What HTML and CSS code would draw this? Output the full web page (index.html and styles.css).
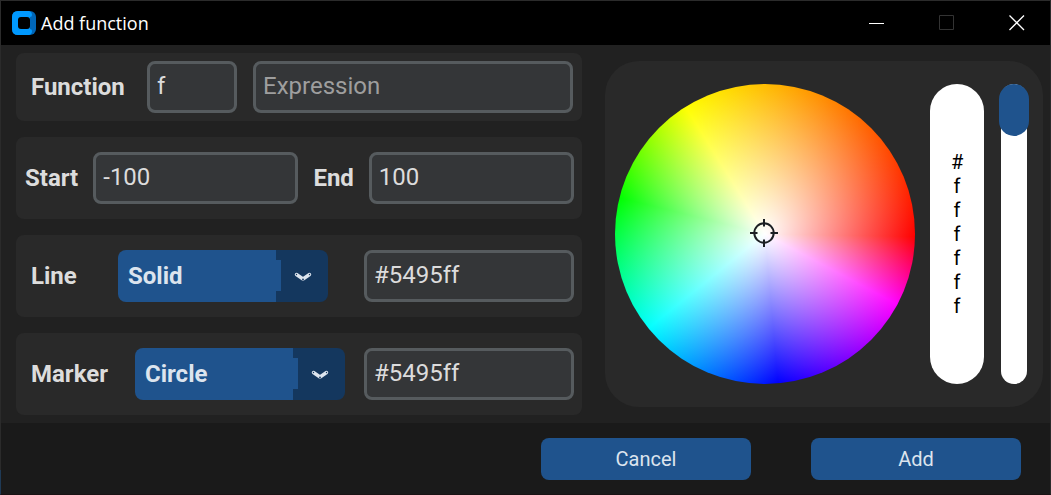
FILE: index.html
```html
<!DOCTYPE html>
<html lang="en">
<head>
<meta charset="utf-8">
<title>Add function</title>
<link rel="stylesheet" href="styles.css">
</head>
<body>
<form class="window">
  <header class="titlebar">
    <svg class="logo" viewBox="0 0 24 24" aria-hidden="true">
      <rect width="24" height="24" rx="6" fill="#0066b8"/>
      <path d="M6 0H17Q20 1 20 4Q20 6 18 6V18Q20 18 20 20Q20 23 17 24H6Q0 24 0 18V6Q0 0 6 0Z" fill="#0099ff"/>
      <rect x="6" y="6" width="12" height="12" rx="3" fill="#000"/>
    </svg>
    <h1 class="title">Add function</h1>
    <button type="button" class="winbtn" aria-label="Minimize"><svg viewBox="0 0 16 16"><path d="M0 8.5H15" stroke="#fff"/></svg></button>
    <button type="button" class="winbtn" aria-label="Maximize" disabled><svg viewBox="0 0 16 16"><path d="M.5 .5H14.5V14.5H.5Z" stroke="#333"/></svg></button>
    <button type="button" class="winbtn" aria-label="Close"><svg viewBox="0 0 16 16"><path d="M.5 .5L15 15M15 .5L.5 15" stroke="#fff" stroke-width="1.3"/></svg></button>
  </header>

  <main class="content">
    <div class="fields">
      <section class="card card-slim">
        <label class="label" for="name">Function</label>
        <input class="entry entry-name" id="name" type="text" value="f">
        <input class="entry entry-grow" type="text" placeholder="Expression" aria-label="Expression">
      </section>
      <section class="card card-range">
        <label class="label" for="start">Start</label>
        <input class="entry entry-grow" id="start" type="text" value="-100">
        <label class="label" for="end">End</label>
        <input class="entry entry-grow" id="end" type="text" value="100">
      </section>
      <section class="card">
        <label class="label label-line" for="line">Line</label>
        <div class="option">
          <select class="select" id="line"><option>Solid</option></select>
          <svg class="chevron" viewBox="0 0 18 10" aria-hidden="true"><path d="M2.5 2.5L9 7L15.5 2.5" fill="none" stroke="#dce4ee" stroke-width="3.4" stroke-linecap="round" stroke-linejoin="round"/><circle cx="2.5" cy="2.5" r=".7" fill="#14375e"/><circle cx="15.5" cy="2.5" r=".7" fill="#14375e"/><circle cx="9" cy="7.5" r=".9" fill="#14375e"/></svg>
        </div>
        <input class="entry entry-color" type="text" value="#5495ff" aria-label="Line color">
      </section>
      <section class="card">
        <label class="label label-marker" for="marker">Marker</label>
        <div class="option">
          <select class="select" id="marker"><option>Circle</option></select>
          <svg class="chevron" viewBox="0 0 18 10" aria-hidden="true"><path d="M2.5 2.5L9 7L15.5 2.5" fill="none" stroke="#dce4ee" stroke-width="3.4" stroke-linecap="round" stroke-linejoin="round"/><circle cx="2.5" cy="2.5" r=".7" fill="#14375e"/><circle cx="15.5" cy="2.5" r=".7" fill="#14375e"/><circle cx="9" cy="7.5" r=".9" fill="#14375e"/></svg>
        </div>
        <input class="entry entry-color" type="text" value="#5495ff" aria-label="Marker color">
      </section>
    </div>

    <section class="picker">
      <div class="wheel">
        <svg class="target" viewBox="0 0 30 30" aria-hidden="true"><g fill="none" stroke="#1c2024" stroke-width="2"><circle cx="14" cy="14" r="9.7"/><path d="M14 0V7.5M14 20.5V28M0 14H7.5M20.5 14H28"/></g></svg>
      </div>
      <output class="swatch"><span class="hex">#ffffff</span></output>
      <input class="brightness" type="range" min="0" max="255" value="255" aria-label="Brightness">
    </section>
  </main>

  <footer class="footer">
    <button type="button" class="button">Cancel</button>
    <button type="submit" class="button">Add</button>
  </footer>
</form>
</body>
</html>
```
FILE: styles.css
```css
* {
  box-sizing: border-box;
}

body {
  margin: 0;
  font-family: Roboto, "Liberation Sans", sans-serif;
  color: #dce4ee;
  background: linear-gradient(#2b2b2b 95%, #1f3a56 95%);
}

.window {
  min-height: 100vh;
  display: flex;
  flex-direction: column;
  border: 1px solid transparent;
  border-right-color: #2b2b2b;
  border-bottom-color: #1a1214;
}

.titlebar {
  height: 44px;
  display: flex;
  align-items: center;
  padding-left: 11px;
  background: #000;
}

.logo {
  width: 24px;
  height: 24px;
}

.title {
  flex: 1;
  margin: 0 0 0 5px;
  font: 400 18px/24px "Open Sans", "Noto Sans", sans-serif;
  color: #fff;
}

.winbtn {
  width: 70px;
  height: 44px;
  padding: 0 0 0 3px;
  border: 0;
  background: none;
}

.winbtn svg {
  display: block;
  width: 16px;
  height: 16px;
  margin: auto;
  fill: none;
}

.content {
  flex: 1;
  display: flex;
  gap: 23px;
  padding: 8px 7px 8px 15px;
  background: #212121;
}

.fields {
  flex: 1;
  min-width: 0;
  display: flex;
  flex-direction: column;
  gap: 16px;
}

.card {
  display: flex;
  align-items: center;
  padding: 15px 8px 15px 15px;
  border-radius: 8px;
  background: #292929;
}

.card-slim {
  gap: 16px;
  padding: 8px 9px 8px 15px;
}

.card-range {
  gap: 15px;
  padding-left: 9px;
}

.label {
  font-size: 24px;
  line-height: 28px;
  font-weight: 700;
  color: #dcdcdc;
}

.card-slim .label {
  min-width: 100px;
}

.label-line {
  width: 87px;
}

.label-marker {
  width: 104px;
}

.entry {
  min-width: 0;
  height: 52px;
  padding: 0 7px 2px;
  border: 3px solid #565b5e;
  border-radius: 8px;
  outline: 0;
  background: #343638;
  color: #dcdcdc;
  font: 400 24px/28px Roboto, sans-serif;
}

.entry::placeholder {
  color: #9e9e9e;
  opacity: 1;
}

.entry-name {
  width: 90px;
}

.entry-grow {
  flex: 1;
}

.entry-color {
  width: 210px;
  margin-left: auto;
}

.option {
  position: relative;
  width: 210px;
}

.select {
  appearance: none;
  display: block;
  width: 100%;
  height: 52px;
  padding: 0 52px 0 10px;
  border: 0;
  border-radius: 8px;
  color: #dce4ee;
  font: 700 24px/28px Roboto, sans-serif;
  background:
    linear-gradient(#1f538d, #1f538d) 0 0 / calc(100% - 52px) 100% no-repeat,
    linear-gradient(#1f538d, #1f538d) 0 10px / calc(100% - 47px) 31px no-repeat,
    #14375e;
}

.chevron {
  position: absolute;
  right: 16px;
  top: 22px;
  width: 18px;
  height: 10px;
  pointer-events: none;
}

.picker {
  display: flex;
  align-items: center;
  gap: 15px;
  margin: 8px 0;
  padding: 23px 14px 23px 10px;
  border-radius: 34px;
  background: #292929;
}

.wheel {
  display: grid;
  place-items: center;
  width: 300px;
  height: 300px;
  border-radius: 50%;
  background:
    radial-gradient(closest-side, #fff, rgba(255, 255, 255, 0)),
    conic-gradient(from 91deg, #f00, #f0f 27deg, #00f 84deg, #0ff 140deg, #0f0 193deg, #ff0 237deg, #f00);
}

.target {
  width: 30px;
  height: 30px;
}

.swatch {
  display: flex;
  align-items: center;
  justify-content: center;
  width: 54px;
  height: 300px;
  border-radius: 27px;
  background: #fff;
}

.hex {
  width: 12px;
  color: #000;
  font-size: 20px;
  line-height: 24px;
  text-align: center;
  word-break: break-all;
}

.brightness {
  appearance: none;
  writing-mode: vertical-lr;
  direction: rtl;
  width: 30px;
  height: 300px;
  margin: 0;
  background: none;
}

.brightness::-webkit-slider-runnable-track {
  width: 26px;
  height: 298px;
  border-radius: 13px;
  background: #fff;
}

.brightness::-webkit-slider-thumb {
  appearance: none;
  width: 30px;
  height: 52px;
  margin-left: -2px;
  border-radius: 15px;
  background: #1f538d;
}

.footer {
  display: flex;
  justify-content: flex-end;
  gap: 60px;
  padding: 15px 29px 14px;
  background: #1a1a1a;
}

.button {
  width: 210px;
  height: 42px;
  padding: 0;
  border: 0;
  border-radius: 8px;
  background: #1f538d;
  color: #dce4ee;
  font: 400 20px/24px Roboto, sans-serif;
}
```
